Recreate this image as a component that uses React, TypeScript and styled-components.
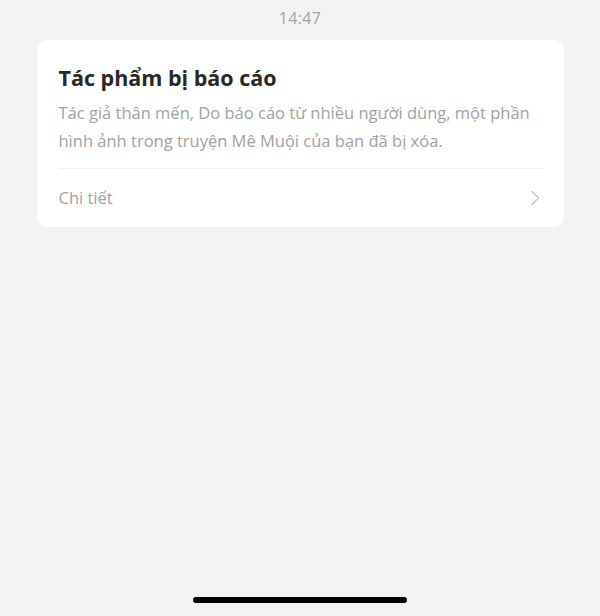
import styled, { createGlobalStyle } from "styled-components";

const GlobalStyle = createGlobalStyle`
  html, body {
    margin: 0;
    padding: 0;
    background: #f3f3f3;
  }
  body {
    font-family: "Open Sans", "Noto Sans", sans-serif;
  }
`;

export default function App() {
  return (
    <>
      <GlobalStyle />
      <Screen>
        <StatusTime>14:47</StatusTime>
        <Card>
          <Title>Tác phẩm bị báo cáo</Title>
          <Body>
            Tác giả thân mến, Do báo cáo từ nhiều người dùng, một phần
            <br />
            hình ảnh trong truyện Mê Muội của bạn đã bị xóa.
          </Body>
          <DetailRow>
            <span>Chi tiết</span>
            <svg width="10" height="16" viewBox="0 0 10 16" fill="none">
              <path d="M2 1.5 L8.5 8 L2 14.5" stroke="#c4c4c4" strokeWidth="1.4" strokeLinecap="round" strokeLinejoin="round" />
            </svg>
          </DetailRow>
        </Card>
        <Spacer />
        <HomeBar />
      </Screen>
    </>
  );
}

const Screen = styled.div`
  width: 600px;
  height: 616px;
  display: flex;
  flex-direction: column;
  align-items: center;
  box-sizing: border-box;
  padding-bottom: 13px;
`;

const StatusTime = styled.div`
  height: 36px;
  line-height: 36px;
  font-size: 16px;
  color: #a3a3a3;
  letter-spacing: 0.3px;
`;

const Card = styled.div`
  margin-top: 4px;
  width: 527px;
  background: #ffffff;
  border-radius: 10px;
  padding: 20px 22px 0;
  box-sizing: border-box;
  display: flex;
  flex-direction: column;
`;

const Title = styled.div`
  font-size: 21.5px;
  font-weight: 700;
  color: #282828;
  line-height: 36px;
`;

const Body = styled.div`
  font-size: 16.5px;
  color: #a2a2a2;
  line-height: 28px;
  margin-top: 3px;
  padding-bottom: 13px;
  border-bottom: 1px solid #efefef;
  white-space: nowrap;
`;

const DetailRow = styled.div`
  height: 58px;
  display: flex;
  align-items: center;
  justify-content: space-between;
  font-size: 16.5px;
  color: #a2a2a2;
  padding-right: 2px;
  span { margin-top: -1px; }
`;

const Spacer = styled.div`
  flex: 1;
`;

const HomeBar = styled.div`
  width: 214px;
  height: 6px;
  border-radius: 3px;
  background: #000;
`;
